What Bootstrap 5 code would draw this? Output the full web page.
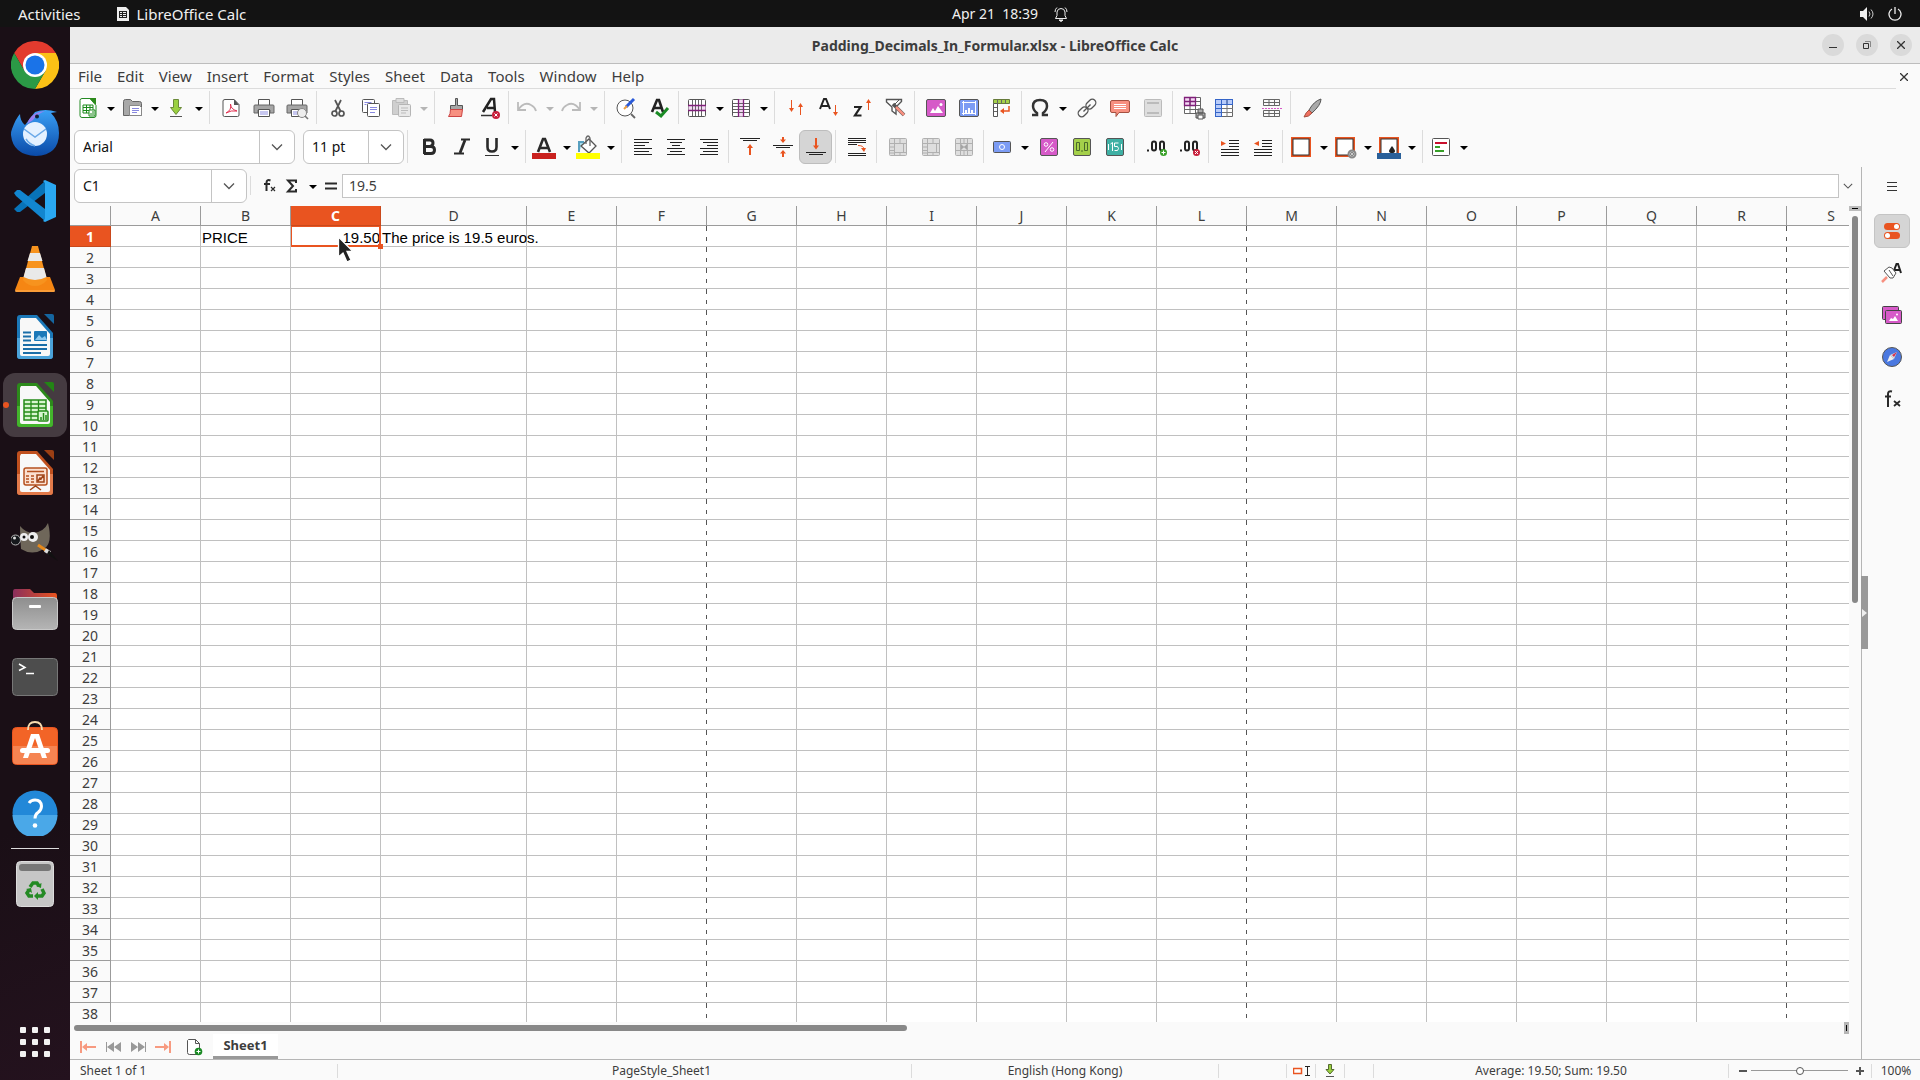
<!DOCTYPE html>
<html lang="en">
<head>
<meta charset="utf-8">
<meta name="viewport" content="width=device-width, initial-scale=1">
<title>Padding_Decimals_In_Formular.xlsx - LibreOffice Calc</title>
<link href="https://cdn.jsdelivr.net/npm/bootstrap@5.3.0/dist/css/bootstrap.min.css" rel="stylesheet">
<style>
:root{--ui:"Noto Sans","Open Sans",sans-serif;--ink:#3d3d3d;--line:#c0c0c0;--accent:#e95420}
body{font:14px/20px var(--ui);color:var(--ink);background:#fafafa}
button{font:inherit;color:inherit;background:none;border:0;padding:0}
svg{display:block;flex:none}
.topbar{height:27px;background:#131313;color:#f0f0f0;display:grid;grid-template-columns:70px 1fr auto 1fr;align-items:center}
.topbar .app-menu{grid-column:1/3;gap:36px;padding-left:18px;font-size:15px}
.topbar .clock{padding-left:30px}
.topbar .indicators{gap:13px;padding-right:18px}
.dock{width:70px;background:linear-gradient(160deg,#1a0f16 0 75%,#24121e)}
.dock button{width:64px;height:64px;margin:2px 3px;border-radius:12px;display:flex;align-items:center;justify-content:center;position:relative}
.dock .active-app{background:#453b41}
.dock .active-app::before{content:"";position:absolute;left:0;top:29px;width:6px;height:6px;border-radius:3px;background:var(--accent)}
.dock hr{width:48px;margin:1px auto;border-top:1px solid #ddd;opacity:1}
.titlebar{height:37px;background:#ebebeb;border-bottom:1px solid #bdbdbd;display:grid;grid-template-columns:1fr auto 1fr;align-items:center}
.titlebar h1{font:bold 14px/20px var(--ui);margin:2px 0 0}
.round{width:22px;height:22px;border-radius:11px;background:#dadada;display:flex;align-items:center;justify-content:center}
.menubar{height:25px}
.menus{border-bottom:1px solid #dcdcdc;height:25px;font-size:15px}
.menus a{color:var(--ink);text-decoration:none;padding:2px 7px 2px 8px}
.doc-close{padding:0 12px 0 4px}
.bar{height:39px;padding:0 0 2px 4px}
.tool{width:33px;height:34px;display:flex;align-items:center;justify-content:center;flex:none}
.tool.drop{width:44px;justify-content:flex-start;padding-left:2px}
.tool.drop::after{content:"";margin:3px 0 0 7px;border:4px solid transparent;border-top-color:#000;border-bottom:0}
.tool.off::after{border-top-color:#b5b5b5}
.tool.on{background:#d5d5d5;border:1px solid #bdbdbd;border-radius:6px}
.rule{width:1px;height:33px;background:#dcdcdc;margin:0 4px 0 3px;flex:none}
.combo{height:34px;border:1px solid #c4c4c4;border-radius:6px;background:#fff;display:flex;overflow:hidden;flex:none}
.combo input{border:0;padding:0 0 0 8px;min-width:0;flex:1;background:none;color:#111;font:inherit;outline:0}
.combo button{width:35px;border-left:1px solid #c4c4c4;display:flex;align-items:center;justify-content:center}
.combo.font-name{width:221px}
.combo.font-size{width:101px}
.combo.name-box{width:173px}
.formula{height:24px;border:1px solid #c4c4c4;background:#fff;padding:0 6px;color:var(--ink);flex:1;min-width:0}
.expand{width:22px;padding-left:4px}
.sheet-view{background:#fff;overflow:hidden;height:816px;flex:1;min-width:0}
.cells{table-layout:fixed;border-collapse:separate;border-spacing:0;width:100%;font:15px/20px "Liberation Sans",Arial,sans-serif;color:#000}
.cells th{font:14px/19px var(--ui);background:#fafafa;color:var(--ink);text-align:center;padding:0;border-right:1px solid #9b9b9b;border-bottom:1px solid #9b9b9b;overflow:hidden}
.cells thead th{height:20px}
.cells tbody th{height:21px}
.cells td{height:21px;padding:3px 1px 0;line-height:17px;border-right:1px solid var(--line);border-bottom:1px solid var(--line);white-space:nowrap}
.cells .page-end{border-right:0;background:linear-gradient(#555 0 5px,#fff 5px 11px,#555 11px 15px,#fff 15px) right/1px 100% no-repeat}
.cells .open-end{border-right:0}
.cells thead .open-end{padding-left:26px}
.cells .hot{background:var(--accent);color:#fff;font-weight:bold;border-color:#c9481b}
.cells .cursor-cell{position:relative;text-align:right;padding-right:0}
.cursor-cell::before{content:"";position:absolute;inset:0 -1px -1px 0;border:2px solid var(--accent);border-width:1px 2px 2px 1px}
.cursor-cell::after{content:"";position:absolute;right:-3px;bottom:-3px;width:5px;height:5px;background:var(--accent)}
.pointer{position:absolute;left:337px;top:236px}
.vbar{width:12px}
.vbar .split{height:5px;background:#bdbdbd;border-top:1px solid #bdbdbd;margin-bottom:5px}
.vbar .split::after{content:"";display:block;width:6px;height:1px;background:#000;margin:1px 3px}
.vbar .thumb{width:6px;height:387px;border-radius:3px;background:#888;margin-left:3px}
.hbar{height:12px;padding:3px 0 0 4px}
.hbar .thumb{width:833px;height:6px;border-radius:3px;background:#888}
.hbar .split{width:5px;height:12px;margin:-3px 12px 0 auto;background:#b5b5b5;padding:3px 2px}
.hbar .split::after{content:"";display:block;width:1px;height:6px;background:#000}
.tabs{height:25px}
.tabs .first-tab{width:36px;height:25px}
.tabs .add-tab{margin:0 8px 0 13px}
.sheet-tab{width:65px;height:25px;background:#fff;border-bottom:3px solid #999;font:bold 13px/20px var(--ui)}
.side{width:59px;border-left:1px solid #b5b5b5;position:relative;padding:4px 0 0 1px}
.side button{width:36px;height:34px;display:flex;align-items:center;justify-content:center;border-radius:6px}
.side .deck{height:32px;margin-bottom:3px}
.side .on{background:#d5d5d5;border:1px solid #c4c4c4}
.side .grip{position:absolute;left:-1px;top:409px;width:7px;height:73px;border-radius:0;background:#999}
.status{height:21px;border-top:1px solid #b5b5b5;font-size:12px;padding-top:1px}
.status>*{height:14px;line-height:14px;border-right:1px solid #dcdcdc;display:flex;align-items:center;justify-content:center;flex:none}
.status>:last-child{border:0}
.zoomer{appearance:none;width:97px;height:8px;background:linear-gradient(#999,#999) center/100% 1px no-repeat}
.zoomer::-webkit-slider-thumb{appearance:none;width:8px;height:8px;border:1px solid #555;border-radius:4px;background:#fff}
.st-sheet{width:268px;padding-left:10px}
.st-select{width:74px}
.st-style{width:500px}
.st-lang{width:307px}
.st-insert{width:68px}
.st-icon{width:29px}
.st-zoom{width:143px;padding-left:4px}
.st-percent{width:48px}
</style>
<script src="https://cdn.jsdelivr.net/npm/bootstrap@5.3.0/dist/js/bootstrap.bundle.min.js"></script>
</head>
<body class="vh-100 overflow-hidden d-flex flex-column">
<svg width="0" height="0" class="position-absolute">
<defs>
<symbol id="chev" viewBox="0 0 12 8"><path d="M1 1.500l5 5 5-5" fill="none" stroke="#555" stroke-width="1.300"/></symbol>
<symbol id="printer" viewBox="0 0 24 24"><path d="M6.500 9V3.500h11V9" fill="#fff" stroke="#555"/><path d="M3 9h18q1 0 1 1v7h-4v-3H6v3H2v-7q0-1 1-1z" fill="#a6a6a6" stroke="#666"/><path d="M6.500 13.500h11v7h-11z" fill="#fff" stroke="#555"/><path d="M8 16h8M8 18h8" stroke="#8f8fe0"/></symbol>
<symbol id="merge" viewBox="0 0 24 24"><rect x="3.500" y="3.500" width="17" height="17" rx="1" fill="#dedede" stroke="#b0b0b0"/><path d="M3 8.500h18M3 15.500h5M3 18h5M8.500 3v18M8.500 17.500h12M3 12h5M14 3v5M17.500 8v9M14 17v4" stroke="#b0b0b0" fill="none"/></symbol>
<symbol id="decimal" viewBox="0 0 24 24"><path d="M3 14.500h2v2H3z" fill="#222"/><path d="M8 8.500q0-2 2-2t2 2v5q0 2-2 2t-2-2zM16 8.500q0-2 2-2t2 2v5q0 2-2 2t-2-2z" fill="none" stroke="#222" stroke-width="2"/></symbol>
<symbol id="indents" viewBox="0 0 24 24"><path d="M11 5.500h10M11 8.500h10M11 11.500h10M3 14.500h18M3 17.500h18M3 20.500h18" stroke="#222" stroke-width="1.200"/></symbol>
</defs></svg>

<header class="topbar">
 <div class="d-flex app-menu"><button>Activities</button><button class="d-flex align-items-center"><svg class="me-2" width="12" height="14" viewBox="0 0 12 14"><path d="M0 0h9l3 3v11H0z" fill="#eee"/><path d="M2 4.500h8M2 6.500h8M2 8.500h8M2 10.500h8M2.500 4v7M5.500 4v7M9.500 4v7" stroke="#222"/></svg>LibreOffice Calc</button></div>
 <button class="clock d-flex align-items-center"><span class="me-3">Apr 21&nbsp; 18:39</span><svg width="14" height="16" viewBox="0 0 14 16" fill="none" stroke="#eee"><path d="M1.500 12.500h11l-1.500-3V6q-.5-3.500-4-3.500T3 6v3.500zM1 6q0-3 2-4.500M13 6q0-3-2-4.500"/><path d="M5 14h4l-2 1.500z" fill="#eee"/></svg></button>
 <div class="indicators d-flex justify-content-end"><svg width="15" height="14" viewBox="0 0 15 14"><path d="M0 4h3l4-4v14l-4-4H0z" fill="#eee"/><path d="M9 4.500q2 2.500 0 5M11 2.500q4 4.500 0 9" fill="none" stroke="#ccc"/></svg><svg width="14" height="14" viewBox="0 0 14 14" fill="none" stroke="#eee" stroke-width="1.300"><path d="M4 2a6 6 0 1 0 6 0M7 0v7"/></svg></div>
</header>

<div class="d-flex flex-grow-1 overflow-hidden">
<nav class="dock d-flex flex-column flex-shrink-0 pt-1" aria-label="Applications">
 <button aria-label="Google Chrome"><svg width="48" height="48" viewBox="0 0 48 48"><path d="M24 12h20.800A24 24 0 0 0 3.200 12L13.600 30z" fill="#e33b2e"/><path d="M24 12h20.800A24 24 0 0 1 24 48l10.400-18z" fill="#fbc116"/><path d="M13.600 30L3.200 12A24 24 0 0 0 24 48l10.400-18z" fill="#2b9a46"/><circle cx="24" cy="24" r="12" fill="#fff"/><circle cx="24" cy="24" r="9.500" fill="#1a73e8"/></svg></button>
 <button aria-label="Thunderbird"><svg width="48" height="48" viewBox="0 0 48 48"><defs><linearGradient id="tb" x2="0" y2="1"><stop stop-color="#3aa0f5"/><stop offset="1" stop-color="#0a4aa8"/></linearGradient></defs><path d="M1 20Q5 9 9 5q0 7 5 11L24 3Q34-1 46 3l-6 1q8 8 8 20 0 22-23 23Q2 46 0 26q0-4 1-6z" fill="url(#tb)"/><path d="M16 15Q20 3 34 2q-8 3-12 9" fill="#9a7ff0"/><circle cx="24" cy="25" r="12" fill="#e4f1ff"/><path d="M13 20l11 8 11-8M24 37q-6-2-9-7" fill="none" stroke="#6aa9e8" stroke-width="1.500"/><circle cx="26" cy="7.500" r="2" fill="#123"/></svg></button>
 <button aria-label="Visual Studio Code"><svg width="42" height="42" viewBox="0 0 42 42"><path d="M0 29l3 3 3 0L31 13V1z" fill="#0873b8"/><path d="M0 13l3-3h3l25 19v12L2 16z" fill="#1286d0"/><path d="M31 0l11 5v32l-11 5-2-1 2-2V3l-2-2z" fill="#2aa8f2"/></svg></button>
 <button aria-label="VLC"><svg width="40" height="46" viewBox="0 0 40 46"><path d="M5 31h30l5 13-1 2H1l-1-2z" fill="#f58613"/><path d="M17 0q3-1 6 0l9 34q-5 6-12 6T8 34z" fill="#f7931e"/><path d="M15 7h10l2.500 8h-15zM11 22h18l2.500 9Q20 37 8.500 31z" fill="#e9e9e9"/><path d="M0 45h40" stroke="#ffb35c"/></svg></button>
 <button aria-label="LibreOffice Writer"><svg width="38" height="46" viewBox="0 0 38 46"><path d="M4 1h17l16 18v23q0 3-3 3H4q-3 0-3-3V4q0-3 3-3z" fill="#1b78b8"/><path d="M1 24h36v18q0 3-3 3H4q-3 0-3-3z" fill="#4ba3da"/><path d="M5 4h15l14 16v20q0 2-2 2H6q-2 0-2-2V6z" fill="#f8f8f8"/><path d="M28 0h8q2 0 2 2v8z" fill="#1566a0"/><path d="M7 18.500h8M7 22.500h8M7 26.500h8M7 31h24M7 35h24M7 39h18" stroke="#1b6ea8" stroke-width="2"/><rect x="18" y="17" width="13" height="10" rx="1" fill="#1b78b8"/><path d="M19 26l4-5 3 3 3-2 2 4z" fill="#8cc8ee"/></svg></button>
 <button class="active-app" aria-label="LibreOffice Calc"><svg width="38" height="46" viewBox="0 0 38 46"><path d="M4 1h17l16 18v23q0 3-3 3H4q-3 0-3-3V4q0-3 3-3z" fill="#2c8a1b"/><path d="M1 24h36v18q0 3-3 3H4q-3 0-3-3z" fill="#43b52c"/><path d="M5 4h15l14 16v20q0 2-2 2H6q-2 0-2-2V6z" fill="#f8f8f8"/><path d="M28 0h8q2 0 2 2v8z" fill="#238415"/><rect x="8" y="18" width="22" height="20" fill="#d7f5cf" stroke="#248a18" stroke-width="1.500"/><path d="M8 22h22M8 26h22M8 30h22M8 34h22M15 18v20M22.500 18v20" stroke="#248a18" stroke-width="1.300"/><rect x="22" y="29" width="10" height="10" rx="1" fill="#d7f5cf" stroke="#248a18" stroke-width="1.500"/><path d="M25 38v-3M27.500 38v-7M30 38v-5" stroke="#248a18" stroke-width="1.500"/></svg></button>
 <button aria-label="LibreOffice Impress"><svg width="38" height="46" viewBox="0 0 38 46"><path d="M4 1h17l16 18v23q0 3-3 3H4q-3 0-3-3V4q0-3 3-3z" fill="#c0501e"/><path d="M1 24h36v18q0 3-3 3H4q-3 0-3-3z" fill="#e27a4a"/><path d="M5 4h15l14 16v20q0 2-2 2H6q-2 0-2-2V6z" fill="#f8f8f8"/><path d="M28 0h8q2 0 2 2v8z" fill="#9c3f14"/><rect x="8" y="18" width="23" height="17" rx="2" fill="#fbe0d0" stroke="#b5501f" stroke-width="1.500"/><path d="M11 21.500h17M10 26h3M15 26h3M10 29h3M15 29h3M10 32h3M15 32h3" stroke="#b5501f" stroke-width="1.500"/><path d="M21 25h7v7h-7zM22 31l2-3 1 1 2-3M19.500 35v2M14 40l5.500-4 5.500 4" fill="none" stroke="#a04418" stroke-width="1.500"/></svg></button>
 <button aria-label="GIMP"><svg class="mt-1" width="48" height="40" viewBox="0 0 48 40"><path d="M9 3q6 7 13 7Q33 9 37 0q5 20-4 26-12 7-23 0-1-12-1-23z" fill="#6f675a"/><circle cx="4.500" cy="17" r="5" fill="#16181c" stroke="#bbb"/><circle cx="3.500" cy="15" r="1.500" fill="#ddd"/><circle cx="13" cy="14" r="4" fill="#eee"/><circle cx="22" cy="14" r="5" fill="#eee"/><circle cx="13" cy="14" r="1.500" fill="#111"/><circle cx="21" cy="14" r="2" fill="#111"/><path d="M27 22l9 6" stroke="#e88a1a" stroke-width="3"/><path d="M34 27l5 3" stroke="#ddd" stroke-width="4"/><path d="M38 27l9 11-11-7z" fill="#111"/></svg></button>
 <button aria-label="Files"><svg width="46" height="42" viewBox="0 0 46 42"><defs><linearGradient id="fo"><stop stop-color="#8a2f5c"/><stop offset="1" stop-color="#e95420"/></linearGradient><linearGradient id="fg" x2="0" y2="1"><stop stop-color="#8e8e8e"/><stop offset="1" stop-color="#b5b5b5"/></linearGradient></defs><path d="M3 1h15l4 4h21q2 0 2 3v10H1V4q0-3 2-3z" fill="url(#fo)"/><rect x=".5" y="9.500" width="45" height="32" rx="4" fill="url(#fg)" stroke="#c8c8c8"/><rect x="17" y="17" width="12" height="3" rx="1" fill="#fff"/></svg></button>
 <button aria-label="Terminal"><svg width="46" height="38" viewBox="0 0 46 38"><rect x=".5" y=".5" width="45" height="37" rx="4" fill="#4d4d4d" stroke="#777"/><path d="M7 6l6 3.500-6 3M14 15.500h8" fill="none" stroke="#fff" stroke-width="1.500"/></svg></button>
 <button class="pb-1" aria-label="Ubuntu Software"><svg width="46" height="44" viewBox="0 0 46 44"><rect x=".5" y="6.500" width="45" height="37" rx="4" fill="#f26427" stroke="#e95420"/><path d="M1 25h44v15q0 3-3 3H4q-3 0-3-3z" fill="#f58452"/><path d="M16 9q0-8 7-8t7 8" fill="none" stroke="#f8dcb0" stroke-width="1.800"/><path d="M11 37l8-24h8l8 24h-5l-7-20-7 20z" fill="#fff"/><rect x="8" y="27" width="30" height="5" rx="2.500" fill="#fff"/></svg></button>
 <button aria-label="Help"><svg width="46" height="46" viewBox="0 0 46 46"><circle cx="23" cy="23" r="22.500" fill="#2288d8"/><path d="M.5 25h45a22.500 22.500 0 0 1-45 0z" fill="#4aa8e8"/><path d="M17 13q2-3 6-3 6 0 6.500 6 0 4-3.500 6.500-3 2-3 6" fill="none" stroke="#fff" stroke-width="3"/><circle cx="23" cy="35.500" r="2.300" fill="#fff"/></svg></button>
 <hr>
 <button aria-label="Trash"><svg width="38" height="46" viewBox="0 0 38 46"><rect x=".5" y=".5" width="37" height="45" rx="4" fill="#c6c6c6" stroke="#ddd"/><rect x="3" y="3" width="32" height="7" rx="3" fill="#777"/><g fill="none" stroke="#248a24" stroke-width="3.500"><path d="M14 26l3-4h4l2 3M26 28l2 4-2 3h-5M17 35h-4l-2-3 2-3"/></g><path d="M25.500 22l-.5 5-5-2zM22 31v8l-4-4zM10 28l5-1 1 5z" fill="#248a24"/></svg></button>
 <button class="mt-auto mb-1 pb-1" aria-label="Show Applications"><svg width="32" height="30" viewBox="0 0 32 30"><g fill="#f2f2f2"><rect x="1" width="6" height="6" rx="1"/><rect x="13" width="6" height="6" rx="1"/><rect x="25" width="6" height="6" rx="1"/><rect x="1" y="12" width="6" height="6" rx="1"/><rect x="13" y="12" width="6" height="6" rx="1"/><rect x="25" y="12" width="6" height="6" rx="1"/><rect x="1" y="24" width="6" height="6" rx="1"/><rect x="13" y="24" width="6" height="6" rx="1"/><rect x="25" y="24" width="6" height="6" rx="1"/></g></svg></button>
</nav>

<main class="d-flex flex-column flex-grow-1 overflow-hidden">
 <div class="titlebar"><span></span><h1>Padding_Decimals_In_Formular.xlsx - LibreOffice Calc</h1>
  <div class="d-flex justify-content-end gap-2 pe-2">
   <button class="round me-1" aria-label="Minimize"><svg width="8" height="8"><path d="M0 6.500h8" stroke="#333"/></svg></button>
   <button class="round me-1" aria-label="Restore"><svg width="8" height="8" fill="none"><path d="M2 .5h5.500V6" stroke="#888"/><path d="M.5 2.500h5v5h-5z" stroke="#333"/></svg></button>
   <button class="round" aria-label="Close"><svg width="8" height="8"><path d="M0 0l8 8M8 0L0 8" stroke="#333" stroke-width="1.300"/></svg></button>
  </div></div>
 <div class="menubar d-flex"><nav class="menus d-flex flex-grow-1" aria-label="Menu"><a href="#">File</a><a href="#">Edit</a><a href="#">View</a><a href="#">Insert</a><a href="#">Format</a><a href="#">Styles</a><a href="#">Sheet</a><a href="#">Data</a><a href="#">Tools</a><a href="#">Window</a><a href="#">Help</a></nav><button class="doc-close" aria-label="Close document"><svg width="8" height="8"><path d="M0 0l8 8M8 0L0 8" stroke="#333" stroke-width="1.300"/></svg></button></div>

 <div class="bar d-flex align-items-center" role="toolbar" aria-label="Standard">
  <button class="tool drop" aria-label="New"><svg width="24" height="24" viewBox="0 0 24 24"><path d="M6 2.500h8l6 7v10q0 2-2 2H6q-2 0-2-2v-15q0-2 2-2z" fill="#fff" stroke="#248a24"/><path d="M13 2h7v7z" fill="#2c8a1b"/><path d="M7 9h10v8H7z" fill="#fff" stroke="#1a8a1a"/><path d="M7 11.500h10M7 14.500h10M10.500 9v8M14 9v8" stroke="#1a8a1a"/><path d="M13 14h6v6h-6z" fill="#fff" stroke="#1a8a1a"/><path d="M15 19v-2M17 19v-4" stroke="#1a8a1a"/></svg></button>
  <button class="tool drop" aria-label="Open"><svg width="24" height="24" viewBox="0 0 24 24"><path d="M3.500 19.500V5.500q0-2 2-2h5l2 2h7q2 0 2 2v12z" fill="#a8a8a8" stroke="#666"/><path d="M9.500 9.500h10l2 2v8h-12z" fill="#fff" stroke="#888"/><path d="M12 12.500h7M12 14.500h7M12 16.500h5" stroke="#8888e0"/></svg></button>
  <button class="tool drop" aria-label="Save"><svg width="24" height="24" viewBox="0 0 24 24"><path d="M9.500 3.500h5v8h3L12 18.500l-5.500-7h3z" fill="#9ad040" stroke="#6b8a3a"/><path d="M6 20.500h12" stroke="#555"/></svg></button>
  <span class="rule"></span>
  <button class="tool" aria-label="Export as PDF"><svg width="24" height="24" viewBox="0 0 24 24"><path d="M6 3.500h9l5 5V19q0 1.500-1.500 1.500h-13Q4 20.500 4 19V5q0-1.500 2-1.500z" fill="#fff" stroke="#555"/><path d="M15 3v6h5z" fill="#555"/><path d="M7 17q6-3 4.500-9 0 5 6.500 7-6-1-11 2z" fill="none" stroke="#e03050"/></svg></button>
  <button class="tool" aria-label="Print"><svg width="24" height="24"><use href="#printer"/></svg></button>
  <button class="tool" aria-label="Print Preview"><svg width="24" height="24" viewBox="0 0 24 24"><use href="#printer"/><circle cx="17" cy="17" r="4.500" fill="#eee" stroke="#888"/><path d="M20 20l3 3" stroke="#777" stroke-width="1.600"/></svg></button>
  <span class="rule"></span>
  <button class="tool" aria-label="Cut"><svg width="24" height="24" viewBox="0 0 24 24" fill="none" stroke="#555" stroke-width="1.700"><path d="M9 4l6 12M15 4L9 16"/><circle cx="8.500" cy="17.500" r="2.500"/><circle cx="15.500" cy="17.500" r="2.500"/></svg></button>
  <button class="tool" aria-label="Copy"><svg width="24" height="24" viewBox="0 0 24 24"><g fill="#fff" stroke="#555"><rect x="3.500" y="3.500" width="12" height="13" rx="1"/><rect x="8.500" y="7.500" width="12" height="13" rx="1"/></g><path d="M5.500 6.500h7M5.500 8.500h2M11 11.500h7M11 13.500h7M11 16.500h5" stroke="#8888e0"/></svg></button>
  <button class="tool drop off" aria-label="Paste"><svg width="24" height="24" viewBox="0 0 24 24"><path d="M3.500 4.500h15v14h-15z" fill="#cfcfcf" stroke="#bbb"/><path d="M7 2.500h8v4H7z" fill="#ddd" stroke="#bbb"/><rect x="9.500" y="8.500" width="12" height="12" rx="1" fill="#e8e8e8" stroke="#b5b5b5"/><path d="M12 12h7M12 14.500h7M12 17h5" stroke="#bbb"/></svg></button>
  <span class="rule"></span>
  <button class="tool" aria-label="Clone Formatting"><svg width="24" height="24" viewBox="0 0 24 24"><path d="M11.500 2.500h2v7h5v4h-12v-4h5z" fill="#a6a6a6" stroke="#555"/><path d="M6.500 13.500h12l-1 7h-13q2-2 2-7z" fill="#f79080" stroke="#c44"/></svg></button>
  <button class="tool" aria-label="Clear Direct Formatting"><svg width="24" height="24" viewBox="0 0 24 24"><path d="M6 16L14 3h3l1 13M10 12h8" fill="none" stroke="#222" stroke-width="2.500"/><path d="M4 19.500h11" stroke="#333" stroke-width="1.500"/><circle cx="19" cy="19" r="4" fill="#c8203c"/><path d="M17.500 17.500l3 3m0-3l-3 3" stroke="#fff"/></svg></button>
  <span class="rule"></span>
  <button class="tool drop off" aria-label="Undo"><svg width="24" height="24" viewBox="0 0 24 24"><path d="M3 6v8h8M3 14q6-9 13-5 4 2 5 6" fill="none" stroke="#bbb" stroke-width="1.800"/></svg></button>
  <button class="tool drop off" aria-label="Redo"><svg width="24" height="24" viewBox="0 0 24 24"><path d="M21 6v8h-8M21 14Q15 5 8 9q-4 2-5 6" fill="none" stroke="#bbb" stroke-width="1.800"/></svg></button>
  <span class="rule"></span>
  <button class="tool" aria-label="Find and Replace"><svg width="24" height="24" viewBox="0 0 24 24"><circle cx="11" cy="12" r="8" fill="#fff" stroke="#555"/><path d="M17 18l4 4" stroke="#666" stroke-width="1.800"/><path d="M12 11l8-8" stroke="#2a5ad8" stroke-width="3"/><path d="M10 13l3-3" stroke="#f0a040" stroke-width="2"/></svg></button>
  <button class="tool" aria-label="Spelling"><svg width="24" height="24" viewBox="0 0 24 24"><path d="M5 16L10 4h2l4 12M7 12h8" fill="none" stroke="#222" stroke-width="2.600"/><path d="M9 16l5 4 7-8" fill="none" stroke="#1a8a24" stroke-width="3"/></svg></button>
  <span class="rule"></span>
  <button class="tool drop" aria-label="Row"><svg width="24" height="24" viewBox="0 0 24 24"><rect x="3.500" y="3.500" width="17" height="17" rx="1" fill="#fff" stroke="#555"/><path d="M3.500 9.500h17v5h-17z" fill="#f4d8f4"/><path d="M7.500 4v16M10.500 4v16M13.500 4v16M16.500 4v16" stroke="#666"/><path d="M3 9.500h18M3 14.500h18" stroke="#80207a" stroke-width="1.300"/></svg></button>
  <button class="tool drop" aria-label="Column"><svg width="24" height="24" viewBox="0 0 24 24"><rect x="3.500" y="3.500" width="17" height="17" rx="1" fill="#fff" stroke="#555"/><path d="M9.500 3.500h5v17h-5z" fill="#f4d8f4"/><path d="M4 7.500h16M4 10.500h16M4 13.500h16M4 16.500h16" stroke="#666"/><path d="M9.500 3v18M14.500 3v18" stroke="#80207a" stroke-width="1.300"/></svg></button>
  <span class="rule"></span>
  <button class="tool" aria-label="Sort"><svg width="24" height="24" viewBox="0 0 24 24"><path d="M7.500 4v9M16.500 10v9" stroke="#e95420"/><path d="M5 12h5l-2.500 4zM14 11h5l-2.500-4z" fill="#e95420"/></svg></button>
  <button class="tool" aria-label="Sort Ascending"><svg width="24" height="24" viewBox="0 0 24 24"><path d="M3 13L7 3h2l4 10M4.500 10h7" fill="none" stroke="#222" stroke-width="2"/><path d="M18.500 9v10" stroke="#e95420"/><path d="M16 16h5l-2.500 4z" fill="#e95420"/></svg></button>
  <button class="tool" aria-label="Sort Descending"><svg width="24" height="24" viewBox="0 0 24 24"><path d="M4 11h6.500L5 19.500h6.500" fill="none" stroke="#222" stroke-width="2.200"/><path d="M18.500 4v10" stroke="#e95420"/><path d="M16 7h5l-2.500-4z" fill="#e95420"/></svg></button>
  <button class="tool" aria-label="AutoFilter"><svg width="24" height="24" viewBox="0 0 24 24"><path d="M3.500 3.500h15v2L13 11v7l-4-3v-4L3.500 6z" fill="#fff" stroke="#555" stroke-width="1.400"/><path d="M5 7l4 4M16 4l-6 6" stroke="#555"/><path d="M10 8l11 11" stroke="#555" stroke-width="3.500"/><path d="M13 11l8 8" stroke="#f79080" stroke-width="2.500"/></svg></button>
  <span class="rule"></span>
  <button class="tool" aria-label="Image"><svg width="24" height="24" viewBox="0 0 24 24"><rect x="2.500" y="3.500" width="19" height="17" rx="1.500" fill="#d65ac8" stroke="#555"/><path d="M6 17l3-5 2 3 3-5 5 7z" fill="#fff"/><circle cx="17" cy="8.500" r="1.500" fill="#fff"/></svg></button>
  <button class="tool" aria-label="Chart"><svg width="24" height="24" viewBox="0 0 24 24"><rect x="2.500" y="3.500" width="19" height="17" rx="1.500" fill="#7c9cf4" stroke="#555"/><path d="M5 6.500h14M5 17.500h14M6.500 5v14M18.500 5v14" stroke="#fff"/><path d="M9 17v-3M12 17v-5M15 17v-3" stroke="#fff" stroke-width="2"/></svg></button>
  <button class="tool" aria-label="Pivot Table"><svg width="24" height="24" viewBox="0 0 24 24"><path d="M3.500 3.500h16v4h-16z" fill="#a4d04a" stroke="#667a3a"/><path d="M3.500 7.500h4v13h-4z" fill="#fff" stroke="#555"/><path d="M7.500 4v3M11.500 4v3M15.500 4v3M4 11.500h3M4 15.500h3" stroke="#666"/><path d="M19 10v5h-7" fill="none" stroke="#e95420" stroke-width="1.500"/><path d="M14 12v6l-4-3z" fill="#e95420"/></svg></button>
  <span class="rule"></span>
  <button class="tool drop" aria-label="Special Character"><svg width="24" height="24" viewBox="0 0 24 24"><path d="M4 19h5v-2q-4-3-4-7 0-6 7-6t7 6q0 4-4 7v2h5" fill="none" stroke="#333" stroke-width="2.500"/></svg></button>
  <button class="tool" aria-label="Hyperlink"><svg width="24" height="24" viewBox="0 0 24 24"><g fill="none" stroke="#555" stroke-width="1.300" transform="rotate(-45 12 12)"><rect x="1" y="8.500" width="11" height="7" rx="3.500"/><rect x="12" y="8.500" width="11" height="7" rx="3.500"/><path d="M7 12h10"/></g></svg></button>
  <button class="tool" aria-label="Comment"><svg width="24" height="24" viewBox="0 0 24 24"><path d="M4 4.500h16q1.500 0 1.500 1.500v9q0 1.500-1.500 1.500h-9l-3 4v-4H4q-1.500 0-1.500-1.500V6Q2.500 4.500 4 4.500z" fill="#f79080" stroke="#a45040"/><path d="M6 8.500h12M6 10.500h12M6 12.500h12" stroke="#fff"/></svg></button>
  <button class="tool" aria-label="Headers and Footers"><svg width="24" height="24" viewBox="0 0 24 24"><rect x="3.500" y="3.500" width="17" height="17" rx="1" fill="#dedede" stroke="#bbb"/><path d="M6 7h12M6 17h12" stroke="#bbb" stroke-width="2"/></svg></button>
  <span class="rule"></span>
  <button class="tool" aria-label="Define Print Area"><svg width="24" height="24" viewBox="0 0 24 24"><path d="M2.500 1.500h16v16h-16z" fill="#fff" stroke="#666"/><path d="M2.500 1.500h11v8h-11z" fill="#f4d8f4"/><path d="M2 5.500h17M2 9.500h17M2 13.500h17M8 1v17M13.500 1v17" stroke="#666"/><path d="M2.500 1.500h11v8h-11zM2 5.500h11M8 1v9" fill="none" stroke="#80207a" stroke-width="1.300"/><path d="M14 17h9v5H14zM16 13h5v4h-5z" fill="#aaa" stroke="#555"/><path d="M16 19h5v4h-5z" fill="#fff" stroke="#555"/></svg></button>
  <button class="tool drop" aria-label="Freeze Rows and Columns"><svg width="24" height="24" viewBox="0 0 24 24"><path d="M3.500 3.500h17v17h-17z" fill="#fff" stroke="#666"/><path d="M3.500 3.500h17v5h-17zM3.500 3.500h6v17h-6z" fill="#b8ccfa"/><path d="M3 12.500h18M3 16.500h18M15 4v17" stroke="#777"/><path d="M3 8.500h18M9.500 3v18M3.500 3v18M3 3.500h18M15 3v5M3 12.500h6M3 16.500h6M3 20.500h6M20.500 3v5" stroke="#3565c8"/></svg></button>
  <button class="tool" aria-label="Split Window"><svg width="24" height="24" viewBox="0 0 24 24"><path d="M4.500 3.500h16v6h-16zM4.500 14.500h16v6h-16zM4 6.500h17M4 17.500h17M10 4v6M15.500 4v6M10 14v7M15.500 14v7" fill="none" stroke="#666"/><path d="M3 12.500h20" stroke="#d65ac8" stroke-dasharray="2 1"/></svg></button>
  <span class="rule"></span>
  <button class="tool" aria-label="Show Draw Functions"><svg width="24" height="24" viewBox="0 0 24 24"><path d="M9 14Q14 5 21 3q0 6-9 14z" fill="#aaa" stroke="#555"/><path d="M9 14l3 3q-3 4-8 4 2-5 5-7z" fill="#f07060" stroke="#a45040"/></svg></button>
 </div>

 <div class="bar d-flex align-items-center" role="toolbar" aria-label="Formatting">
  <div class="combo font-name me-2"><input aria-label="Font name" value="Arial"><button aria-label="Font list"><svg width="12" height="8"><use href="#chev"/></svg></button></div>
  <div class="combo font-size"><input aria-label="Font size" value="11 pt"><button aria-label="Size list"><svg width="12" height="8"><use href="#chev"/></svg></button></div>
  <span class="rule"></span>
  <button class="tool" aria-label="Bold"><svg width="24" height="24" viewBox="0 0 24 24"><path d="M7 5h6q3 0 3 3t-3 3.500H8M8 11.500h6q3.500 0 3.500 3.500t-3.500 3.500H7M7.500 4v15" fill="none" stroke="#2a2a2a" stroke-width="3"/></svg></button>
  <button class="tool" aria-label="Italic"><svg width="24" height="24" viewBox="0 0 24 24"><path d="M11 4.500h9M4 18.500h10" stroke="#2a2a2a" stroke-width="1.800"/><path d="M15 5l-5 13" stroke="#2a2a2a" stroke-width="2.800"/></svg></button>
  <button class="tool drop" aria-label="Underline"><svg width="24" height="24" viewBox="0 0 24 24"><path d="M7.500 3v9q0 4.500 4.500 4.500t4.500-4.500V3" fill="none" stroke="#2a2a2a" stroke-width="2.600"/><path d="M5 20.500h14" stroke="#333"/></svg></button>
  <span class="rule"></span>
  <button class="tool drop" aria-label="Font Color"><svg width="24" height="24" viewBox="0 0 24 24"><path d="M6 17l5-13h2l5 13M8 13h8" fill="none" stroke="#2a2a2a" stroke-width="2.600"/><path d="M0 18h24v6H0z" fill="#c9211e"/></svg></button>
  <button class="tool drop" aria-label="Background Color"><svg width="24" height="24" viewBox="0 0 24 24"><path d="M3 17V7h5" fill="#a8e0f0" stroke="#58a0c0" stroke-width="2"/><path d="M5 11l8-7 7 7-7 7z" fill="#fff" stroke="#555" stroke-width="1.300"/><path d="M10 9V3q2-4 4 0v8" fill="none" stroke="#666" stroke-width="1.300"/><path d="M0 18h24v6H0z" fill="#ffff00"/></svg></button>
  <span class="rule"></span>
  <button class="tool" aria-label="Align Left"><svg width="24" height="24"><path d="M3 4.500h18M3 7.500h15M3 10.500h11M3 13.500h18M3 16.500h15M3 19.500h18" stroke="#222"/></svg></button>
  <button class="tool" aria-label="Center Horizontally"><svg width="24" height="24"><path d="M3 4.500h18M6 7.500h12M8 10.500h8M3 13.500h18M6 16.500h12M3 19.500h18" stroke="#222"/></svg></button>
  <button class="tool" aria-label="Align Right"><svg width="24" height="24"><path d="M3 4.500h18M6 7.500h15M10 10.500h11M3 13.500h18M6 16.500h15M3 19.500h18" stroke="#222"/></svg></button>
  <span class="rule"></span>
  <button class="tool" aria-label="Align Top"><svg width="24" height="24"><path d="M2 3.500h20M5 5.500h14" stroke="#222"/><path d="M12 11v9" stroke="#e95420" stroke-width="2"/><path d="M9 13h6l-3-4z" fill="#e95420"/></svg></button>
  <button class="tool" aria-label="Center Vertically"><svg width="24" height="24"><path d="M2 10.500h20M5 12.500h14" stroke="#222"/><path d="M12 2v4M12 17v5" stroke="#e95420" stroke-width="2"/><path d="M9 4.500h6L12 8zM9 18.500h6L12 15z" fill="#e95420"/></svg></button>
  <button class="tool on" aria-label="Align Bottom" aria-pressed="true"><svg width="24" height="24"><path d="M2 17.500h20M5 19.500h14" stroke="#222"/><path d="M12 3v8" stroke="#e95420" stroke-width="2"/><path d="M9 10.500h6l-3 4z" fill="#e95420"/></svg></button>
  <span class="rule"></span>
  <button class="tool" aria-label="Wrap Text"><svg width="24" height="24"><path d="M3 3.500h18M3 5.500h18M3 9.500h9M3 7.500h18M3 18.500h18M3 20.500h18" stroke="#222"/><path d="M13 10.500q6 0 6 4" fill="none" stroke="#e95420"/><path d="M16 13h5l-2 4z" fill="#e95420"/></svg></button>
  <span class="rule"></span>
  <button class="tool" aria-label="Merge and Center"><svg width="24" height="24"><use href="#merge"/></svg></button>
  <button class="tool" aria-label="Merge Cells"><svg width="24" height="24"><use href="#merge"/></svg></button>
  <button class="tool" aria-label="Unmerge Cells"><svg width="24" height="24"><rect x="3.500" y="3.500" width="17" height="17" rx="1" fill="#dedede" stroke="#b0b0b0"/><path d="M3 8.500h18M3 15.500h18M8.500 3v18M15.500 3v18M8.500 12h7M12 3v5M12 16v5" stroke="#b0b0b0"/><path d="M9 9l3 3-3 3zM15 9l-3 3 3 3z" fill="#a5a5a5"/></svg></button>
  <span class="rule"></span>
  <button class="tool drop" aria-label="Format as Currency"><svg width="24" height="24"><rect x="3.500" y="6.500" width="17" height="11" rx="1" fill="#7c9cf4" stroke="#555"/><circle cx="12" cy="12" r="2.500" fill="none" stroke="#fff"/></svg></button>
  <button class="tool" aria-label="Format as Percent"><svg width="24" height="24"><rect x="3.500" y="3.500" width="17" height="17" rx="1.500" fill="#d65ac8" stroke="#555"/><path d="M8 17l8-10" stroke="#fff"/><circle cx="9" cy="9.500" r="1.800" fill="none" stroke="#fff"/><circle cx="15" cy="14.500" r="1.800" fill="none" stroke="#fff"/></svg></button>
  <button class="tool" aria-label="Format as Number"><svg width="24" height="24"><rect x="3.500" y="3.500" width="17" height="17" rx="1.500" fill="#a4d04a" stroke="#555"/><path d="M6.500 7.500h3v8h-3zM14.500 7.500h3v8h-3zM12 15v2" fill="none" stroke="#4a6a2a"/></svg></button>
  <button class="tool" aria-label="Format as Date"><svg width="24" height="24"><rect x="3.500" y="3.500" width="17" height="17" rx="1.500" fill="#3fb0a4" stroke="#555"/><path d="M5.500 9v6M7.500 9l2-1.500V16M15.500 8h-4v3.500q4-1 4 2t-4 2M18.500 9v6" fill="none" stroke="#fff"/></svg></button>
  <span class="rule"></span>
  <button class="tool" aria-label="Add Decimal Place"><svg width="24" height="24" viewBox="0 0 24 24"><use href="#decimal"/><circle cx="19.500" cy="17.500" r="3.500" fill="#38a028"/><path d="M17.500 17.500h4M19.500 15.500v4" stroke="#fff"/></svg></button>
  <button class="tool" aria-label="Delete Decimal Place"><svg width="24" height="24" viewBox="0 0 24 24"><use href="#decimal"/><circle cx="19.500" cy="17.500" r="3.500" fill="#c8203c"/><path d="M18 16l3 3m0-3l-3 3" stroke="#fff"/></svg></button>
  <span class="rule"></span>
  <button class="tool" aria-label="Increase Indent"><svg width="24" height="24" viewBox="0 0 24 24"><use href="#indents"/><path d="M3 6l5 2.500L3 11z" fill="#e95420"/></svg></button>
  <button class="tool" aria-label="Decrease Indent"><svg width="24" height="24" viewBox="0 0 24 24"><use href="#indents"/><path d="M8 6L3 8.500 8 11z" fill="#e95420"/></svg></button>
  <span class="rule"></span>
  <button class="tool drop" aria-label="Borders"><svg width="24" height="24"><rect x="3" y="3" width="18" height="18" fill="#fff" stroke="#e95420" stroke-width="2"/><rect x="4" y="4" width="16" height="16" fill="none" stroke="#333"/></svg></button>
  <button class="tool drop" aria-label="Border Style"><svg width="24" height="24"><rect x="3" y="3" width="18" height="18" fill="#fff" stroke="#e95420" stroke-width="2"/><rect x="4" y="4" width="16" height="16" fill="none" stroke="#333"/><circle cx="19" cy="19" r="3.500" fill="#ccc" stroke="#888" stroke-width="2"/><circle cx="19" cy="19" r="1.500" fill="#eee" stroke="#777"/></svg></button>
  <button class="tool drop" aria-label="Border Color"><svg width="24" height="24"><rect x="3" y="3" width="18" height="18" fill="#fff" stroke="#e95420" stroke-width="2"/><rect x="4" y="4" width="16" height="16" fill="none" stroke="#333"/><path d="M15 11q3 4 3 5 0 2-3 2t-3-2q0-1 3-5z" fill="#222"/><path d="M0 18h24v6H0z" fill="#2a6099"/></svg></button>
  <span class="rule"></span>
  <button class="tool drop" aria-label="Conditional"><svg width="24" height="24"><rect x="3.500" y="3.500" width="17" height="17" rx="1" fill="#fff" stroke="#555"/><path d="M6 8h12" stroke="#c8102e" stroke-width="2"/><path d="M6 12h5M6 16h9" stroke="#38a028" stroke-width="2"/></svg></button>
 </div>

 <div class="d-flex flex-grow-1">
  <div class="d-flex flex-column flex-grow-1 overflow-hidden">
   <div class="bar d-flex align-items-center">
    <div class="combo name-box"><input aria-label="Name Box" value="C1"><button aria-label="Name list"><svg width="12" height="8"><use href="#chev"/></svg></button></div>
    <span class="rule h-50"></span>
    <button class="ms-2" aria-label="Function Wizard"><svg width="13" height="16" fill="none" stroke="#2a2a2a"><path d="M7.500 2.500Q3.500 1 3.500 5v8M1 6h6" stroke-width="2"/><path d="M8 9l4 4M12 9l-4 4" stroke-width="1.200"/></svg></button>
    <button class="tool drop ms-1" aria-label="Select Function"><svg width="20" height="24"><path d="M14 9V6.500H6L11 12l-5 5.500h8V15" fill="none" stroke="#2a2a2a" stroke-width="2"/></svg></button>
    <button class="me-1" aria-label="Formula"><svg width="14" height="16"><path d="M1 5.500h12M1 10.500h12" stroke="#2a2a2a" stroke-width="2"/></svg></button>
    <input class="formula" aria-label="Input line" value="19.5">
    <button class="expand" aria-label="Expand Formula Bar"><svg width="10" height="8"><use href="#chev"/></svg></button>
   </div>
   <div class="d-flex">
    <div class="sheet-view"><table class="cells" id="grid"></table></div>
    <div class="vbar flex-shrink-0"><div class="split"></div><div class="thumb"></div></div>
   </div>
   <div class="hbar d-flex"><div class="thumb"></div><div class="split"></div></div>
   <div class="tabs d-flex align-items-center">
    <button class="tool first-tab" aria-label="First Sheet"><svg width="16" height="12"><path d="M1 0v12" stroke="#f79a80" stroke-width="2"/><path d="M4 6h12" stroke="#f79a80" stroke-width="2"/><path d="M2 6l5-4v8z" fill="#f79a80"/></svg></button>
    <button aria-label="Previous Sheet"><svg width="16" height="10"><path d="M.5 0v10" stroke="#999"/><path d="M1 5l7-5v10zM8 5l7-5v10z" fill="#999"/></svg></button>
    <button class="mx-2" aria-label="Next Sheet"><svg width="16" height="10"><path d="M15.500 0v10" stroke="#999"/><path d="M15 5L8 0v10zM8 5L1 0v10z" fill="#999"/></svg></button>
    <button aria-label="Last Sheet"><svg width="18" height="12"><path d="M16 0v12" stroke="#f79a80" stroke-width="2"/><path d="M1 6h12" stroke="#f79a80" stroke-width="2"/><path d="M15 6l-5-4v8z" fill="#f79a80"/></svg></button>
    <button class="add-tab" aria-label="Add Sheet"><svg width="20" height="18"><path d="M3.500 1.500h7l4 4v11h-10q-2 0-2-2v-12z" fill="#fff" stroke="#555"/><path d="M10.500 1.500v4h4" fill="none" stroke="#555"/><circle cx="13.500" cy="13.500" r="3.800" fill="#1a8a24"/><path d="M11.500 13.500h4M13.500 11.500v4" stroke="#fff"/></svg></button>
    <button class="sheet-tab">Sheet1</button>
   </div>
  </div>
  <aside class="side d-flex flex-column align-items-center flex-shrink-0 gap-2" aria-label="Sidebar">
   <button class="deck" aria-label="Sidebar Settings"><svg width="10" height="10"><path d="M0 .5h10M0 4.500h10M0 8.500h10" stroke="#333"/></svg></button>
   <button class="on" aria-label="Properties"><svg width="16" height="16"><rect width="16" height="7" rx="3.500" fill="#e95420"/><rect y="9" width="16" height="7" rx="3.500" fill="#e95420"/><circle cx="12.500" cy="3.500" r="2.500" fill="#fff"/><circle cx="3.500" cy="12.500" r="2.500" fill="#fff"/></svg></button>
   <button aria-label="Styles"><svg width="22" height="22"><path d="M12 11L15.500 2h1.500l3 9M13 8h6" fill="none" stroke="#222" stroke-width="2"/><path d="M3 9l5-4 3 1 4 5-3 5H9z" fill="#fff" stroke="#555"/><path d="M8 8l4 6" stroke="#555"/><path d="M6 15l-5 5" stroke="#f79080" stroke-width="2.500"/></svg></button>
   <button aria-label="Gallery"><svg width="20" height="18"><rect x=".5" y=".5" width="16" height="13" rx="1" fill="#d65ac8" stroke="#444"/><rect x="3.500" y="4.500" width="16" height="13" rx="1" fill="#d65ac8" stroke="#444"/><path d="M7 15l2-3 2 1 2-3 3 5z" fill="#fff"/><circle cx="15" cy="8.500" r="1" fill="#fff"/></svg></button>
   <button aria-label="Navigator"><svg width="20" height="20"><circle cx="10" cy="10" r="9.500" fill="#4a78e0" stroke="#555"/><path d="M5 15l3-7 4 4z" fill="#eee"/><path d="M15 5L8 8l4 4z" fill="#ddd"/><path d="M15 5l-5 3 2 2z" fill="#d03050"/></svg></button>
   <button aria-label="Functions"><svg width="18" height="18" fill="none" stroke="#2a2a2a"><path d="M9 1.500Q5 .5 5 4v13M2 6.500h6" stroke-width="2"/><path d="M11 11l6 5M17 11l-6 5" stroke-width="1.800"/></svg></button>
   <button class="grip" aria-label="Hide sidebar"><svg width="5" height="8"><path d="M0 0l5 4-5 4z" fill="#eee"/></svg></button>
  </aside>
 </div>

 <footer class="status d-flex align-items-center">
  <span class="st-sheet justify-content-start">Sheet 1 of 1</span>
  <span class="st-select border-0"></span>
  <span class="st-style">PageStyle_Sheet1</span>
  <span class="st-lang">English (Hong Kong)</span>
  <span class="st-insert"></span>
  <span class="st-icon"><svg width="17" height="10"><path d="M.5 2.500h8v5h-8z" fill="#fff" stroke="#e95420" stroke-width="1.500"/><path d="M12 .5h5M12 9.500h5M14.500 0v10" stroke="#222"/></svg></span>
  <span class="st-icon"><svg width="10" height="13"><path d="M3.500.5h3v5h2.500L5 10 1 5.500h2.500z" fill="#9ad040" stroke="#556b2f"/><path d="M1 12.500h8" stroke="#555"/></svg></span>
  <span class="st-icon"></span>
  <span class="flex-grow-1">Average: 19.50; Sum: 19.50</span>
  <span class="st-zoom gap-1"><button aria-label="Zoom out"><svg width="8" height="8"><path d="M0 4h8" stroke="#555" stroke-width="2"/></svg></button><input class="zoomer me-1" type="range" aria-label="Zoom" value="50"><button aria-label="Zoom in"><svg width="9" height="8"><path d="M0 4h8M4 0v8" stroke="#555" stroke-width="2"/></svg></button></span>
  <span class="st-percent">100%</span>
 </footer>
</main>
</div>
<svg class="pointer" width="20" height="28" viewBox="0 0 20 28"><path d="M1.500 1v20l4.500-4 4 9 4-2-4-8.500h6z" fill="#222" stroke="#fff" stroke-width="1.300"/></svg>
<script>
const letters = [...'ABCDEFGHIJKLMNOPQRS'];
const pageEnds = 'FLR';
const values = {B1: 'PRICE', C1: '19.50', D1: 'The price is 19.5 euros.'};
let html = '<colgroup><col style="width:41px">' + letters.map(c =>
  c === 'S' ? '<col>' : `<col style="width:${c === 'D' ? 146 : 90}px">`).join('') + '</colgroup>';
html += '<thead><tr><th></th>' + letters.map(c =>
  `<th class="${c === 'C' ? 'hot' : c === 'S' ? 'open-end' : ''}">${c}</th>`).join('') + '</tr></thead><tbody>';
for (let r = 1; r <= 38; r++) {
  html += `<tr><th class="${r === 1 ? 'hot' : ''}">${r}</th>` + letters.map(c => {
    const cls = c + r === 'C1' ? 'cursor-cell' : pageEnds.includes(c) ? 'page-end' : c === 'S' ? 'open-end' : '';
    return `<td class="${cls}">${values[c + r] || ''}</td>`;
  }).join('') + '</tr>';
}
document.getElementById('grid').innerHTML = html + '</tbody>';
</script>
</body>
</html>
